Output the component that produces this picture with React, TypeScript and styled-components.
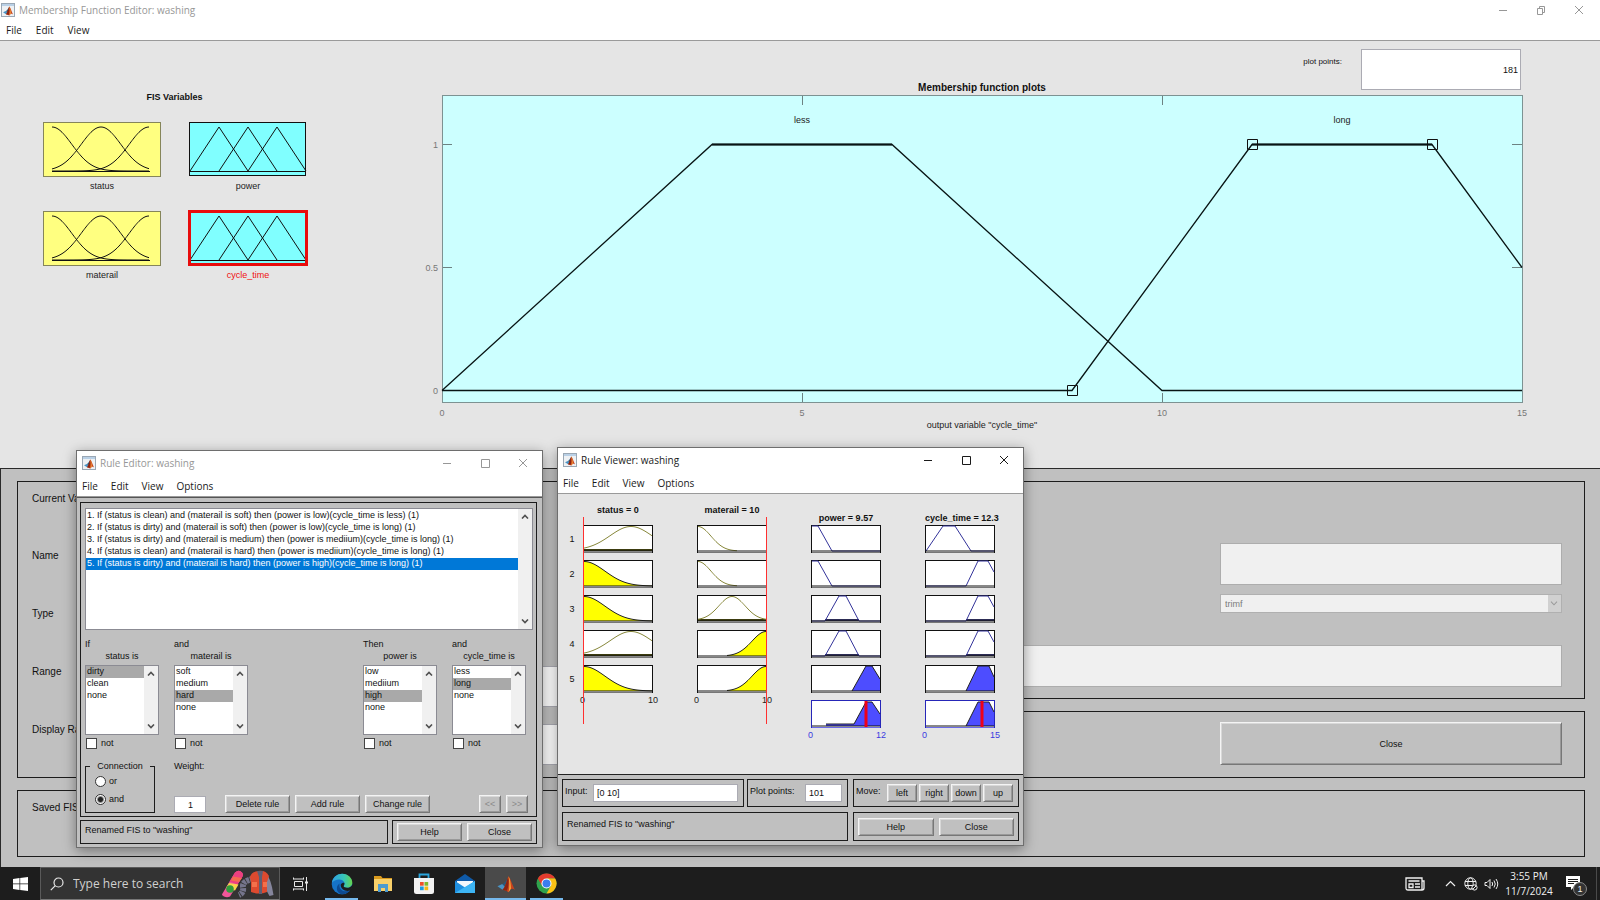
import React from "react";
import styled, { createGlobalStyle, css } from "styled-components";

const GlobalStyle = createGlobalStyle`
  *, *::before, *::after { box-sizing: border-box; }
  body { margin: 0; background: #1d1d1d; }
  body, button, input, select {
    font-family: "Liberation Sans", Arial, sans-serif;
    font-size: 9px;
    line-height: 12px;
    color: #111;
  }
`;

const chromeFont = css`
  font-family: "Open Sans", "Noto Sans", sans-serif;
  font-size: 10px;
  line-height: 14px;
`;

/* ---------- Desktop and window chrome ---------- */

const Desktop = styled.div`
  position: relative;
  min-height: 100vh;
  display: flex;
  flex-direction: column;
`;

const MainWindow = styled.main`
  flex: 1;
  display: flex;
  flex-direction: column;
  background: #e5e5e5;
`;

const FloatingWindow = styled.section<{ $left: number; $top: number }>`
  position: absolute;
  left: ${(p) => p.$left}px;
  top: ${(p) => p.$top}px;
  width: 467px;
  display: flex;
  flex-direction: column;
  background: #c0c0c0;
  border: 1px solid #6e6e6e;
  box-shadow: 0 3px 12px rgba(0, 0, 0, 0.4);
`;

const TitleBar = styled.header<{ $main?: boolean; $active?: boolean }>`
  ${chromeFont}
  display: flex;
  align-items: center;
  gap: 4px;
  height: ${(p) => (p.$main ? 19 : 24)}px;
  padding: ${(p) => (p.$main ? "0 16px 0 1px" : "0 14px 0 5px")};
  background: #fff;
  color: ${(p) => (p.$active ? "#1a1a1a" : "#979797")};
`;

const WindowTitle = styled.h1`
  flex: 1;
  margin: 0;
  font: inherit;
`;

const WindowControls = styled.div`
  display: flex;
  gap: 28px;
`;

const ControlButton = styled.button`
  display: flex;
  padding: 0;
  border: 0;
  background: none;
  color: inherit;
`;

const MenuBar = styled.nav<{ $main?: boolean }>`
  ${chromeFont}
  display: flex;
  align-items: center;
  gap: ${(p) => (p.$main ? 14 : 13)}px;
  height: 22px;
  padding: 0 ${(p) => (p.$main ? 6 : 5)}px;
  background: #fff;
  border-bottom: 1px solid #9a9a9a;
`;

const MenuItem = styled.button`
  padding: 0;
  border: 0;
  background: none;
  font: inherit;
  color: #1a1a1a;
`;

function MatlabMembrane() {
  return (
    <>
      <path d="M1 8.6 4.4 7l2 1.9L4.6 11z" fill="#4a93c4" />
      <path d="M4.4 7C6 6.600 7 4.600 8.300 2.200L8 8.500 6.400 8.900z" fill="#27597c" />
      <path d="M8.700 1.600C10 2.600 11.300 7.500 13.300 11.200 11.600 9.800 10.200 10 8.800 12.700 7.900 12.500 7.200 11.200 4.600 11 6.600 9.500 7.400 4.600 8.700 1.600z" fill="#c8431d" />
      <path d="M8.700 1.600C8.900 5 9 8.500 7.700 11.800L4.600 11C6.600 9.500 7.400 4.600 8.700 1.600z" fill="#8a2412" />
      <path d="M8.700 1.600C9.900 3.400 10.300 6.500 10.500 10.200L8.800 12.700C9.600 9 9.400 5 8.700 1.600z" fill="#f4a13c" />
    </>
  );
}

function AppIcon() {
  return (
    <svg width="14" height="14" viewBox="0 0 14 14" aria-hidden="true">
      <rect x="0.500" y="0.500" width="13" height="13" fill="#eef1f4" stroke="#9aa7b4" />
      <rect x="1" y="1" width="12" height="2" fill="#b9d0e6" />
      <g transform="translate(1.200 2.200) scale(0.820)">
        <MatlabMembrane />
      </g>
    </svg>
  );
}

function Controls({ restore }: { restore?: boolean }) {
  return (
    <WindowControls>
      <ControlButton aria-label="Minimize">
        <svg width="10" height="10" fill="none" stroke="currentColor">
          <path d="M1 5.500h8" />
        </svg>
      </ControlButton>
      <ControlButton aria-label={restore ? "Restore" : "Maximize"}>
        <svg width="10" height="10" fill="none" stroke="currentColor">
          {restore ? <path d="M1.500 3.500h5v6h-5zM3.500 3.500v-2h5v6h-2" /> : <path d="M1.500 1.500h8v8h-8z" />}
        </svg>
      </ControlButton>
      <ControlButton aria-label="Close">
        <svg width="10" height="10" fill="none" stroke="currentColor">
          <path d="M1 1l8 8M9 1l-8 8" />
        </svg>
      </ControlButton>
    </WindowControls>
  );
}

function Menu({ items, main }: { items: string[]; main?: boolean }) {
  return (
    <MenuBar $main={main}>
      {items.map((item) => (
        <MenuItem key={item}>{item}</MenuItem>
      ))}
    </MenuBar>
  );
}

/* ---------- Shared controls ---------- */

const Panel = styled.div`
  border: 1px solid #1c1c1c;
  background: #c0c0c0;
`;

const BevelButton = styled.button<{ $width?: number; $height?: number }>`
  width: ${(p) => (p.$width ? `${p.$width}px` : "100%")};
  height: ${(p) => p.$height ?? 18}px;
  padding: 0;
  background: #c0c0c0;
  border: 1px solid;
  border-color: #f4f4f4 #777 #777 #f4f4f4;
  box-shadow: inset 1px 1px #d8d8d8, inset -1px -1px #999;
  text-align: center;

  &:disabled {
    color: #8a8a8a;
  }
`;

const TextField = styled.input<{ $height: number; $align?: string; $width?: number }>`
  width: ${(p) => (p.$width ? `${p.$width}px` : "100%")};
  height: ${(p) => p.$height}px;
  padding: 0 2px 0 3px;
  border: 1px solid #ababb3;
  background: #fff;
  text-align: ${(p) => p.$align ?? "left"};

  &:disabled {
    background: #f0f0f0;
    border-color: #adadad;
  }
`;

/* ---------- Upper figure area ---------- */

const FigureArea = styled.div`
  display: grid;
  grid-template-columns: 442px minmax(0, 1fr);
  min-height: 427px;
  padding: 8px 78px 0 0;
`;

const Variables = styled.section`
  padding: 42px 0 0 43px;
`;

const VariablesTitle = styled.h2`
  width: 263px;
  margin: 0 0 19px;
  font-size: 9px;
  line-height: 12px;
  text-align: center;
`;

const VariableGrid = styled.div`
  display: grid;
  grid-template-columns: 118px 118px;
  gap: 19px 28px;
`;

const Variable = styled.figure<{ $selected?: boolean }>`
  display: flex;
  flex-direction: column;
  gap: 3px;
  margin: 0;
  text-align: center;
  color: ${(p) => (p.$selected ? "#f01010" : "#222")};
`;

const bell = (centre: number, sigma: number, from: number, to: number, base: number, height: number) => {
  const points: string[] = [];
  for (let x = from; x <= to; x += 1) {
    const y = base - height * Math.exp(-((x - centre) ** 2) / (2 * sigma ** 2));
    points.push(`${x},${y.toFixed(2)}`);
  }
  return points.join(" ");
};

function InputThumb() {
  return (
    <svg width="118" height="55" fill="none" stroke="#111">
      <rect x="0.500" y="0.500" width="117" height="54" fill="#ffff80" stroke="#85855a" />
      <polyline points={bell(9, 19.8, 9, 106, 49, 44)} />
      <polyline points={bell(58, 19.8, 9, 106, 49, 44)} />
      <polyline points={bell(106, 19.8, 9, 106, 49, 44)} />
      <path d="M9 49.500h98" />
    </svg>
  );
}

function OutputThumb({ selected }: { selected?: boolean }) {
  return (
    <svg width="118" height="55" fill="none" stroke="#111" overflow="visible">
      <rect x="0.500" y="0.500" width="116" height="53" fill="#80ffff" />
      <path d="M1 49 30 5l29 44M30 49 59 5l29 44M59 49 88 5l29 44" />
      <path d="M1 49.500h116" />
      {selected && <rect x="0.500" y="0.500" width="117" height="53" stroke="#e80c0c" strokeWidth="3" />}
    </svg>
  );
}

const PlotColumn = styled.section`
  display: flex;
  flex-direction: column;
`;

const PlotHeader = styled.div`
  display: grid;
  grid-template-columns: 1fr auto 1fr;
  height: 46px;
`;

const PlotTitle = styled.h2`
  grid-column: 2;
  align-self: end;
  margin: 0;
  font-size: 10px;
  line-height: 14px;
`;

const PlotPoints = styled.div`
  display: flex;
  justify-content: flex-end;
  gap: 19px;
  padding-right: 1px;
  font-size: 8px;

  label {
    padding-top: 7px;
  }
`;

const PlotSvg = styled.svg`
  display: block;
  width: 100%;
  overflow: visible;
  font-size: 9px;
`;

function MembershipPlot() {
  return (
    <PlotSvg viewBox="0 0 1080 340" fill="none" role="img" aria-label="Membership function plots">
      <rect x="0.500" y="0.500" width="1080" height="307" fill="#ccffff" stroke="#7d9292" />
      <path
        d="M360.500 1v9M720.500 1v9M360.500 298v9M720.500 298v9M1 49.500h9M1 172.500h9M1070 49.500h10M1070 172.500h10"
        stroke="#6d8282"
      />
      <g stroke="#081414" strokeWidth="1.300">
        <path d="M0 295.500 270 49.500H450L720 295.500H1080" />
        <path d="M0 295.500H630L810 49.500H990L1080 172.500" />
        <path d="M270 49.500H450M810 49.500H990" strokeWidth="2" />
      </g>
      <path d="M625.500 290.500h10v10h-10zM805.500 44.500h10v10h-10zM985.500 44.500h10v10h-10z" stroke="#111" />
      <g fill="#222" textAnchor="middle">
        <text x="360" y="28">less</text>
        <text x="900" y="28">long</text>
        <text x="540" y="333">output variable "cycle_time"</text>
      </g>
      <g fill="#777" textAnchor="middle">
        <text x="0" y="321">0</text>
        <text x="360" y="321">5</text>
        <text x="720" y="321">10</text>
        <text x="1080" y="321">15</text>
      </g>
      <g fill="#777" textAnchor="end">
        <text x="-4" y="53">1</text>
        <text x="-4" y="176">0.5</text>
        <text x="-4" y="299">0</text>
      </g>
    </PlotSvg>
  );
}

/* ---------- Lower control area ---------- */

const ControlArea = styled.div`
  flex: 1;
  display: grid;
  grid-template-columns: minmax(0, 1fr) minmax(0, 1fr);
  grid-template-rows: 218px 67px 67px;
  gap: 12px 13px;
  padding: 12px 15px 10px 16px;
  background: #c0c0c0;
  border: solid #2a2a2a;
  border-width: 1px 0 0 1px;
`;

const VariablePanel = styled(Panel)`
  grid-row: 1 / 3;
  display: grid;
  grid-template-columns: 280px 1fr;
  grid-template-rows: 57px repeat(3, 58px) 42px;
  padding: 11px 60px 0 14px;
`;

const FieldLabel = styled.label`
  font-size: 10px;
`;

const FunctionPanel = styled(Panel)`
  display: flex;
  flex-direction: column;
  align-items: flex-end;
  padding: 61px 22px 0 100px;
`;

const FunctionSelect = styled.select`
  appearance: none;
  width: 342px;
  height: 19px;
  margin: 9px 0 32px;
  padding: 0 4px;
  border: 1px solid #b0b0b0;
  border-radius: 0;
  opacity: 1;
  color: #7b7b7b;
  background: #f0f0f0
    url("data:image/svg+xml,%3Csvg xmlns='http://www.w3.org/2000/svg' width='13' height='18' fill='none' stroke='%23999'%3E%3Cpath fill='%23d0d0d0' stroke='none' d='M0 0h13v18H0z'/%3E%3Cpath d='M3 7l3 3 3-3'/%3E%3C/svg%3E")
    right center no-repeat;
`;

const ClosePanel = styled(Panel)`
  display: flex;
  justify-content: flex-end;
  align-items: flex-start;
  padding: 10px 22px;
`;

const SavedPanel = styled(Panel)`
  grid-column: 1 / 3;
  padding: 11px 14px;
  font-size: 10px;
`;

/* ---------- Rule editor ---------- */

const EditorBody = styled.div`
  display: flex;
  flex-direction: column;
  gap: 3px;
  padding: 4px 5px 3px 3px;
  border-top: 1px solid #555;
`;

const EditorPanel = styled(Panel)`
  display: flex;
  flex-direction: column;
  padding: 5px 3px 3px 4px;
`;

const ListFrame = styled.div<{ $height: number }>`
  display: flex;
  height: ${(p) => p.$height}px;
  border: 1px solid #8b8b93;
  background: #fff;
`;

const ListSelect = styled.select<{ $blue?: boolean }>`
  flex: 1;
  min-width: 0;
  height: 100%;
  padding: ${(p) => (p.$blue ? 1 : 0)}px 0 0;
  border: 0;
  border-radius: 0;
  outline: 0;
  overflow: hidden;
  background: #fff;

  option {
    height: 12px;
    min-height: 12px;
    padding: 0 1px;
    line-height: 12px;
    font-size: 9px;
  }

  option:checked {
    background-image: ${(p) =>
      p.$blue ? "linear-gradient(#0078d7, #0078d7)" : "linear-gradient(#a9a9a9, #a9a9a9)"};
    -webkit-text-fill-color: ${(p) => (p.$blue ? "#fff" : "#111")};
  }
`;

const ScrollTrack = styled.div`
  display: flex;
  flex-direction: column;
  justify-content: space-between;
  align-items: center;
  width: 14px;
  padding: 5px 0;
  background: #f0f0f0;
`;

function Scroller() {
  return (
    <ScrollTrack aria-hidden="true">
      <svg width="8" height="5" fill="none" stroke="#505050" strokeWidth="1.600">
        <path d="M1 4.500l3-3 3 3" />
      </svg>
      <svg width="8" height="5" fill="none" stroke="#505050" strokeWidth="1.600">
        <path d="M1 0.500l3 3 3-3" />
      </svg>
    </ScrollTrack>
  );
}

const TermGrid = styled.div`
  display: grid;
  grid-template-columns: 74px 74px 1fr 74px 74px;
  column-gap: 15px;
  margin: 8px 7px 11px 0;
`;

const Term = styled.div<{ $column: number }>`
  grid-column: ${(p) => p.$column};
  display: flex;
  flex-direction: column;

  > label:first-of-type {
    text-align: center;
    margin-bottom: 3px;
  }
`;

const CheckLabel = styled.label`
  display: flex;
  align-items: center;
  gap: 4px;
  margin-top: 2px;
  padding-left: 1px;

  input {
    appearance: none;
    width: 11px;
    height: 11px;
    margin: 0;
    border: 1px solid #444;
    background: #fff;
  }
`;

const EditorActions = styled.div`
  display: flex;
  align-items: flex-end;
`;

const Connection = styled.fieldset`
  width: 70px;
  height: 53px;
  margin: 0 19px 0 0;
  padding: 0;
  border: 1px solid #1c1c1c;

  legend {
    margin: 0 auto;
    padding: 0 7px;
    text-align: center;
  }
`;

const RadioLabel = styled.label`
  display: flex;
  align-items: center;
  gap: 3px;
  height: 18px;
  padding-left: 9px;

  input {
    appearance: none;
    width: 11px;
    height: 11px;
    margin: 0;
    border: 1px solid #333;
    border-radius: 50%;
    background: #fff;
  }

  input:checked {
    background: radial-gradient(#222 0 2px, #fff 4px);
  }
`;

const Weight = styled.div`
  display: flex;
  flex-direction: column;
  justify-content: space-between;
  align-self: stretch;
  width: 32px;
  margin-right: 19px;
`;

const RuleButtons = styled.div`
  display: flex;
  gap: 5px;
`;

const StepButtons = styled(RuleButtons)`
  margin: 0 5px 0 auto;
`;

const FooterRow = styled.div<{ $gap: number }>`
  display: flex;
  gap: ${(p) => p.$gap}px;
`;

const StatusPanel = styled(Panel)<{ $tall?: boolean }>`
  flex: 1;
  padding: ${(p) => (p.$tall ? 5 : 3)}px 4px;
`;

const ButtonPanel = styled(Panel)<{ $width: number; $tall?: boolean }>`
  display: flex;
  align-items: center;
  gap: 5px;
  width: ${(p) => p.$width}px;
  height: ${(p) => (p.$tall ? 29 : 24)}px;
  padding: 2px 4px;
`;

const rules = [
  "1. If (status is clean) and (materail is soft) then (power is low)(cycle_time is less) (1)",
  "2. If (status is dirty) and (materail is soft) then (power is low)(cycle_time is long) (1)",
  "3. If (status is dirty) and (materail is medium) then (power is mediium)(cycle_time is long) (1)",
  "4. If (status is clean) and (materail is hard) then (power is mediium)(cycle_time is long) (1)",
  "5. If (status is dirty) and (materail is hard) then (power is high)(cycle_time is long) (1)",
];

const terms = [
  { column: 1, lead: "If", name: "status", options: ["dirty", "clean", "none"], value: "dirty" },
  { column: 2, lead: "and", name: "materail", options: ["soft", "medium", "hard", "none"], value: "hard" },
  { column: 4, lead: "Then", name: "power", options: ["low", "mediium", "high", "none"], value: "high" },
  { column: 5, lead: "and", name: "cycle_time", options: ["less", "long", "none"], value: "long" },
];

function RuleEditor() {
  return (
    <FloatingWindow $left={76} $top={450}>
      <TitleBar>
        <AppIcon />
        <WindowTitle>Rule Editor: washing</WindowTitle>
        <Controls />
      </TitleBar>
      <Menu items={["File", "Edit", "View", "Options"]} />
      <EditorBody>
        <EditorPanel>
          <ListFrame $height={122}>
            <ListSelect $blue size={10} defaultValue={rules[4]} aria-label="Rules">
              {rules.map((rule) => (
                <option key={rule}>{rule}</option>
              ))}
            </ListSelect>
            <Scroller />
          </ListFrame>
          <TermGrid>
            {terms.map((term) => (
              <Term key={term.name} $column={term.column}>
                <span>{term.lead}</span>
                <label htmlFor={`term-${term.name}`}>{term.name} is</label>
                <ListFrame $height={70}>
                  <ListSelect id={`term-${term.name}`} size={5} defaultValue={term.value}>
                    {term.options.map((option) => (
                      <option key={option}>{option}</option>
                    ))}
                  </ListSelect>
                  <Scroller />
                </ListFrame>
                <CheckLabel>
                  <input type="checkbox" />
                  not
                </CheckLabel>
              </Term>
            ))}
          </TermGrid>
          <EditorActions>
            <Connection>
              <legend>Connection</legend>
              <RadioLabel>
                <input type="radio" name="connection" />
                or
              </RadioLabel>
              <RadioLabel>
                <input type="radio" name="connection" defaultChecked />
                and
              </RadioLabel>
            </Connection>
            <Weight>
              <label htmlFor="weight">Weight:</label>
              <TextField id="weight" $height={17} $align="center" defaultValue="1" />
            </Weight>
            <RuleButtons>
              <BevelButton $width={65}>Delete rule</BevelButton>
              <BevelButton $width={65}>Add rule</BevelButton>
              <BevelButton $width={65}>Change rule</BevelButton>
            </RuleButtons>
            <StepButtons>
              <BevelButton $width={22} disabled>{"<<"}</BevelButton>
              <BevelButton $width={22} disabled>{">>"}</BevelButton>
            </StepButtons>
          </EditorActions>
        </EditorPanel>
        <FooterRow $gap={4}>
          <StatusPanel>Renamed FIS to "washing"</StatusPanel>
          <ButtonPanel $width={145}>
            <BevelButton>Help</BevelButton>
            <BevelButton>Close</BevelButton>
          </ButtonPanel>
        </FooterRow>
      </EditorBody>
    </FloatingWindow>
  );
}

/* ---------- Rule viewer ---------- */

const ViewerFigure = styled.div`
  display: flex;
  gap: 6px;
  height: 280px;
  padding: 10px 0 0 9px;
  background: #e5e5e5;
`;

const RuleNumbers = styled.ol`
  display: flex;
  flex-direction: column;
  gap: 23px;
  width: 10px;
  margin: 0;
  padding: 29px 0 0;
  list-style: none;
  text-align: center;
`;

const ViewerColumns = styled.div`
  display: grid;
  grid-template-columns: repeat(4, 70px);
  align-items: start;
  gap: 44px;
`;

const ViewerColumn = styled.div<{ $line?: "left" | "right" }>`
  position: relative;
  display: flex;
  flex-direction: column;
  gap: 7px;

  ${(p) =>
    p.$line &&
    css`
      &::after {
        content: "";
        position: absolute;
        top: 13px;
        ${p.$line}: 0;
        width: 1px;
        height: 207px;
        background: #ff3030;
      }
    `}
`;

const ColumnTitle = styled.h2<{ $output?: boolean }>`
  height: 14px;
  margin: 0;
  padding-top: ${(p) => (p.$output ? 8 : 0)}px;
  font-size: 9px;
  line-height: 12px;
  text-align: center;
  white-space: nowrap;
`;

const Ticks = styled.div<{ $output?: boolean }>`
  display: flex;
  justify-content: space-between;
  margin: -6px -5px 0 -3px;
  color: ${(p) => (p.$output ? "#3a3ae0" : "#222")};
`;

type Shape = { line: string; fill?: boolean; strip?: [number, number]; centroid?: number };

const clean: Shape = { line: bell(48, 21, 1, 69, 25, 23.5), strip: [1, 69] };
const dirty: Shape = { line: bell(1, 21, 1, 69, 26, 24.5), fill: true };
const soft: Shape = { line: bell(1, 13, 1, 40, 26, 24.5) };
const medium: Shape = { line: bell(35, 13, 1, 69, 25, 23.5), strip: [1, 69] };
const hard: Shape = { line: bell(69, 14, 30, 69, 26, 24.5), fill: true };

const low: Shape = { line: "1,1 7,1 21,26 69,26" };
const mediium: Shape = { line: "1,26 14,26 28,1 35,1 48,26 69,26", strip: [14, 48] };
const high: Shape = { line: "41,26 55,1 61,1 69,14", fill: true };
const less: Shape = { line: "1,26 18,1 30,1 46,26 69,26" };
const long: Shape = { line: "1,26 41,26 53,1 63,1 69,12" };
const longStrip: Shape = { ...long, strip: [41, 69] };
const longFill: Shape = { line: "41,26 53,1 64,1 69,12", fill: true };

function MiniPlot({ shape, output, total }: { shape: Shape; output?: boolean; total?: boolean }) {
  const lineColour = shape.fill ? "#222" : output ? "#33339a" : "#87873a";
  const frame = total ? "#2626b8" : "#111";
  const start = shape.line.split(",")[0];
  return (
    <svg width="70" height="28" fill="none">
      <rect x="0.500" y="0.500" width="69" height="27" fill="#fff" stroke={frame} />
      <path d="M1 27.500h68" stroke={total ? "#6b6be8" : "#777"} />
      {shape.fill && (
        <polygon points={`${start},26 ${shape.line} 69,26`} fill={output ? "#4d4dff" : "#ffff00"} />
      )}
      {shape.strip && (
        <rect
          x={shape.strip[0]}
          y="24"
          width={shape.strip[1] - shape.strip[0]}
          height="2"
          fill={output ? "#2c2c55" : "#3c3c10"}
        />
      )}
      <polyline points={shape.line} stroke={lineColour} />
      <path d="M1 26h68" stroke="#111" />
      {shape.centroid && <path d={`M${shape.centroid} 1v26`} stroke="#f00018" strokeWidth="3" />}
    </svg>
  );
}

const columns: {
  title: string;
  output?: boolean;
  line?: "left" | "right";
  range: [string, string];
  shapes: Shape[];
  total?: Shape;
}[] = [
  { title: "status = 0", line: "left", range: ["0", "10"], shapes: [clean, dirty, dirty, clean, dirty] },
  { title: "materail = 10", line: "right", range: ["0", "10"], shapes: [soft, soft, medium, hard, hard] },
  {
    title: "power = 9.57",
    output: true,
    range: ["0", "12"],
    shapes: [low, low, mediium, mediium, high],
    total: { line: "15,24 43,24 55,2 61,2 69,14", fill: true, centroid: 55 },
  },
  {
    title: "cycle_time = 12.3",
    output: true,
    range: ["0", "15"],
    shapes: [less, long, longStrip, longStrip, longFill],
    total: { line: "41,26 53,2 64,2 69,12", fill: true, centroid: 57 },
  },
];

const ViewerControls = styled.div`
  display: flex;
  flex-direction: column;
  gap: 5px;
  padding: 4px 4px 4px 4px;
  border-top: 1px solid #222;
`;

const FieldPanel = styled(Panel)<{ $width?: number }>`
  ${(p) => (p.$width ? `width: ${p.$width}px;` : "flex: 1;")}
  display: flex;
  align-items: flex-start;
  justify-content: space-between;
  padding: 4px 5px 4px 2px;

  label, span {
    line-height: 14px;
  }
`;

const FieldGroup = styled.div`
  flex: 1;
  display: flex;
  gap: 3px;
`;

const MoveButtons = styled.div`
  display: flex;
  gap: 2px;
`;

function RuleViewer() {
  return (
    <FloatingWindow $left={557} $top={447}>
      <TitleBar $active>
        <AppIcon />
        <WindowTitle>Rule Viewer: washing</WindowTitle>
        <Controls />
      </TitleBar>
      <Menu items={["File", "Edit", "View", "Options"]} />
      <ViewerFigure>
        <RuleNumbers>
          {[1, 2, 3, 4, 5].map((n) => (
            <li key={n}>{n}</li>
          ))}
        </RuleNumbers>
        <ViewerColumns>
          {columns.map((column) => (
            <ViewerColumn key={column.title} $line={column.line}>
              <ColumnTitle $output={column.output}>{column.title}</ColumnTitle>
              {column.shapes.map((shape, i) => (
                <MiniPlot key={i} shape={shape} output={column.output} />
              ))}
              {column.total && <MiniPlot shape={column.total} output total />}
              <Ticks $output={column.output}>
                <span>{column.range[0]}</span>
                <span>{column.range[1]}</span>
              </Ticks>
            </ViewerColumn>
          ))}
        </ViewerColumns>
      </ViewerFigure>
      <ViewerControls>
        <FooterRow $gap={5}>
          <FieldGroup>
            <FieldPanel>
              <label htmlFor="rule-input">Input:</label>
              <TextField id="rule-input" $height={18} $width={145} defaultValue="[0 10]" />
            </FieldPanel>
            <FieldPanel $width={101}>
              <label htmlFor="viewer-points">Plot points:</label>
              <TextField id="viewer-points" $height={18} $width={37} defaultValue="101" />
            </FieldPanel>
          </FieldGroup>
          <FieldPanel $width={166}>
            <span>Move:</span>
            <MoveButtons>
              <BevelButton $width={30}>left</BevelButton>
              <BevelButton $width={30}>right</BevelButton>
              <BevelButton $width={30}>down</BevelButton>
              <BevelButton $width={30}>up</BevelButton>
            </MoveButtons>
          </FieldPanel>
        </FooterRow>
        <FooterRow $gap={5}>
          <StatusPanel $tall>Renamed FIS to "washing"</StatusPanel>
          <ButtonPanel $width={166} $tall>
            <BevelButton>Help</BevelButton>
            <BevelButton>Close</BevelButton>
          </ButtonPanel>
        </FooterRow>
      </ViewerControls>
    </FloatingWindow>
  );
}

/* ---------- Taskbar ---------- */

const Taskbar = styled.footer`
  ${chromeFont}
  display: flex;
  align-items: stretch;
  height: 33px;
  background: #1d1d1d;
  color: #f0f0f0;
`;

const TaskButton = styled.button<{ $open?: boolean; $active?: boolean }>`
  display: flex;
  align-items: center;
  justify-content: center;
  width: 41px;
  padding: 0;
  border: 0;
  background: ${(p) => (p.$active ? "#4a4a4a" : "none")};
  ${(p) =>
    p.$open &&
    css`
      box-shadow: inset 0 -2px #76b9ed;
    `}
`;

const StartButton = styled(TaskButton)`
  width: 40px;
`;

/* Open but unfocused windows get an underline narrower than the button. */
const OpenTaskButton = styled(TaskButton)`
  background: linear-gradient(#76b9ed, #76b9ed) center bottom / 33px 2px no-repeat;
`;

const SearchBox = styled.label`
  display: flex;
  align-items: center;
  gap: 9px;
  width: 240px;
  padding: 0 4px 0 9px;
  background: #333;
  border: 1px solid #5a5a5a;
  border-bottom-color: #777;

  input {
    flex: 1;
    min-width: 0;
    padding: 0;
    border: 0;
    background: none;
    font-family: "Open Sans", "Noto Sans", sans-serif;
    font-size: 12px;
    line-height: 16px;
  }

  input::placeholder {
    color: #d0d0d0;
    opacity: 1;
  }
`;

const Tray = styled.div`
  display: flex;
  align-items: center;
  margin-left: auto;
  padding-right: 3px;
  border-right: 1px solid #4a4a4a;
  margin-right: 3px;
`;

const TrayButton = styled.button<{ $gap: number }>`
  display: flex;
  margin: 0 ${(p) => p.$gap}px 0 0;
  padding: 0;
  border: 0;
  background: none;
  color: #f0f0f0;
`;

const Clock = styled.time`
  width: 52px;
  margin-right: 11px;
  font-size: 10px;
  line-height: 15px;
  text-align: center;
`;

const Notice = styled(TrayButton)`
  position: relative;

  span {
    position: absolute;
    left: 7px;
    top: 6px;
    width: 14px;
    height: 14px;
    border: 1px solid #8a8a8a;
    border-radius: 50%;
    background: #333;
    font-size: 9px;
    line-height: 12px;
    text-align: center;
  }
`;

function SearchArt() {
  return (
    <svg width="54" height="28" viewBox="0 0 54 28" aria-hidden="true">
      <path d="M1.500 23.500 14 2.500Q18-1 21 2.500q1.500 1.500.5 4L9 26.500q-3 1.500-6 0t-1.500-3z" fill="#f0569a" />
      <path d="M8.500 11.500 14 2.500Q18-1 21 2.500q1.500 1.500.5 4l-5 8z" fill="#ec3f7f" />
      <path d="M8 13l9.500 1.500-3.500 6L5 18z" fill="#f7d34c" />
      <path d="M12 6.500l9 1.500-3 4-8-1.500z" fill="#f36c4f" />
      <circle cx="9" cy="19" r="3.800" fill="#2f9c3c" />
      <path d="M32 9Q21 11 22 17q1 6-4 8" fill="none" stroke="#75758c" strokeWidth="6" strokeDasharray="3 .8" />
      <path d="M45 4q5 4 7.500 21l-4 1q-5-8-6-18z" fill="#85859c" />
      <path d="M29 7q1-5 8-6 8-1 11 5l-2 6v10q-8 3-16 0V12z" fill="#dd4a2f" />
      <path d="M36 1h6l-1 6v17h-3V7z" fill="#5f5f73" />
      <path d="M31 12h5v5h-5zM42 12h4v5h-4z" fill="#f3704b" />
    </svg>
  );
}

function TaskbarView() {
  return (
    <Taskbar>
      <StartButton aria-label="Start">
        <svg width="15" height="14" viewBox="0 0 15 14" fill="#fff">
          <path d="M0 2 6.500 1v5.500H0zM7.200.9 15 0v6.500H7.200zM0 7.300h6.500V13L0 12zM7.200 7.300H15V14l-7.800-1z" />
        </svg>
      </StartButton>
      <SearchBox>
        <svg width="14" height="14" viewBox="0 0 14 14" fill="none" stroke="#e8e8e8" strokeWidth="1.200">
          <circle cx="8.500" cy="5.500" r="4.500" />
          <path d="M5.300 8.700.8 13.200" />
        </svg>
        <input type="search" placeholder="Type here to search" aria-label="Search" />
        <SearchArt />
      </SearchBox>
      <TaskButton aria-label="Task view">
        <svg width="15" height="14" fill="none" stroke="#e8e8e8">
          <path d="M1.500 4.500h8v5h-8zM.5 2.500v-2M.5 2h10M10.500.5v2M.5 11.500v2M.5 12h10M10.500 11.500v2M13.500 0v14" />
          <path d="M12 5.500h3" strokeWidth="2" />
        </svg>
      </TaskButton>
      <OpenTaskButton aria-label="Edge">
        <svg width="22" height="22" viewBox="0 0 22 22">
          <defs>
            <linearGradient id="edge-top" x1="0" x2="1">
              <stop offset="0" stopColor="#2f9fe4" />
              <stop offset="0.600" stopColor="#37c6b6" />
              <stop offset="1" stopColor="#65d54f" />
            </linearGradient>
          </defs>
          <circle cx="11" cy="11" r="10.300" fill="#1673c7" />
          <path d="M.8 10C2 3.500 6.500.7 11.300.7c6 0 10 4.500 10 8.800 0 3.500-2.600 5.300-5.300 5.300-2 0-3.300-.6-3.300-1.300s1-1 .8-3C13.200 8 11 6.500 8 6.500 5 6.500 2.300 8 .8 10z" fill="url(#edge-top)" />
          <path d="M8.500 10.500c-1 6 3.500 9.500 10.500 7-2 2.500-5 4-8.500 3.700C5 20 4.500 13 8.500 10.500z" fill="#0c4a92" />
          <path d="M13.400 10c.3 2-1.200 2.800-.7 3.500.5.900 3.600 2 6.500.4 1-.6 1.800-1.400 2.100-2.500.3 3-.6 4.800-2.300 6.100-4 1.500-9.500-1-9.300-5.700.8-2 3.400-2.300 3.700-1.800z" fill="#1d1d1d" />
        </svg>
      </OpenTaskButton>
      <TaskButton aria-label="File Explorer">
        <svg width="20" height="18" viewBox="0 0 20 18">
          <path d="M1 1h7l1.500 2H19v3H1z" fill="#d99a1e" />
          <path d="M1 4h18v12H1z" fill="#f8d06a" />
          <path d="M5 9h10v8h-3v-4H8v4H5z" fill="#4d9bcf" />
        </svg>
      </TaskButton>
      <TaskButton aria-label="Store">
        <svg width="20" height="22" viewBox="0 0 20 22">
          <path d="M5.500 7V1.500h9V7" fill="none" stroke="#2aa5dd" strokeWidth="1.800" />
          <path d="M0 5h20v13.500q0 2.500-2.500 2.500h-15Q0 21 0 18.500z" fill="#f2f2f2" />
          <path d="M6 9h3.700v3.700H6z" fill="#f0502b" />
          <path d="M10.500 9h3.700v3.700h-3.700z" fill="#7fba2c" />
          <path d="M6 13.500h3.700v3.700H6z" fill="#1e9ae0" />
          <path d="M10.500 13.500h3.700v3.700h-3.700z" fill="#f7b916" />
        </svg>
      </TaskButton>
      <TaskButton aria-label="Mail">
        <svg width="22" height="20" viewBox="0 0 22 20">
          <path d="M1 7 11 0l10 7v3H1z" fill="#0f5aa8" />
          <path d="M3 7h16v8H3z" fill="#f4f8fc" />
          <path d="M1 7l10 6.500L21 7v12H1z" fill="#1f8fe0" />
          <path d="M1 19 21 7v12z" fill="#3db5f4" />
        </svg>
      </TaskButton>
      <TaskButton $open $active aria-label="MATLAB">
        <svg width="20" height="20" viewBox="0 0 14 14">
          <MatlabMembrane />
        </svg>
      </TaskButton>
      <OpenTaskButton aria-label="Chrome">
        <svg width="21" height="21" viewBox="0 0 21 21">
          <circle cx="10.500" cy="10.500" r="10" fill="#2fa24c" />
          <path d="M1.800 5.500A10 10 0 0 1 19.200 5.500H10.500L6.200 13z" fill="#e33b2e" />
          <path d="M19.200 5.500A10 10 0 0 1 10.500 20.500L14.800 13 10.500 5.500z" fill="#fbc116" />
          <circle cx="10.500" cy="10.500" r="5" fill="#fff" />
          <circle cx="10.500" cy="10.500" r="4" fill="#3b7ded" />
        </svg>
      </OpenTaskButton>
      <Tray>
        <TrayButton $gap={20} aria-label="News">
          <svg width="20" height="14" fill="none" stroke="currentColor" strokeWidth="1.300">
            <path d="M1 1h16v12H3q-2 0-2-2zM17 4h2v7q0 2-2 2M3.500 4h11M4 7h4v3.500H4zM10 7h5M10 10h5" />
          </svg>
        </TrayButton>
        <TrayButton $gap={8} aria-label="Hidden icons">
          <svg width="11" height="7" fill="none" stroke="currentColor" strokeWidth="1.200">
            <path d="M1 6l4.500-4.500L10 6" />
          </svg>
        </TrayButton>
        <TrayButton $gap={6} aria-label="Network">
          <svg width="14" height="14" fill="none" stroke="currentColor">
            <circle cx="6.500" cy="6.500" r="5.700" />
            <ellipse cx="6.500" cy="6.500" rx="2.700" ry="5.700" />
            <path d="M1 4.500h11M1 8.500h11" />
            <circle cx="10.500" cy="10.500" r="2.600" fill="#1d1d1d" />
            <path d="M8.800 12.200l3.400-3.400" />
          </svg>
        </TrayButton>
        <TrayButton $gap={4} aria-label="Volume">
          <svg width="15" height="12" fill="none" stroke="currentColor">
            <path d="M1 4.500h2l3-3v9l-3-3H1zM8 4q1.300 2 0 4M10 2.500q2.500 3.500 0 7M12 1q3.500 5 0 10" />
          </svg>
        </TrayButton>
        <Clock>
          3:55 PM
          <br />
          11/7/2024
        </Clock>
        <Notice $gap={13} aria-label="Notifications">
          <svg width="14" height="15">
            <path d="M0 0h14v11H8l-3 3v-3H0z" fill="#fff" />
            <path d="M2 3.500h10M2 5.500h10M2 7.500h6" stroke="#1d1d1d" />
          </svg>
          <span>1</span>
        </Notice>
      </Tray>
    </Taskbar>
  );
}

export default function App() {
  return (
    <Desktop>
      <GlobalStyle />
      <MainWindow>
        <TitleBar $main>
          <AppIcon />
          <WindowTitle>Membership Function Editor: washing</WindowTitle>
          <Controls restore />
        </TitleBar>
        <Menu main items={["File", "Edit", "View"]} />
        <FigureArea>
          <Variables>
            <VariablesTitle>FIS Variables</VariablesTitle>
            <VariableGrid>
              <Variable>
                <InputThumb />
                <figcaption>status</figcaption>
              </Variable>
              <Variable>
                <OutputThumb />
                <figcaption>power</figcaption>
              </Variable>
              <Variable>
                <InputThumb />
                <figcaption>materail</figcaption>
              </Variable>
              <Variable $selected>
                <OutputThumb selected />
                <figcaption>cycle_time</figcaption>
              </Variable>
            </VariableGrid>
          </Variables>
          <PlotColumn>
            <PlotHeader>
              <PlotTitle>Membership function plots</PlotTitle>
              <PlotPoints>
                <label htmlFor="plot-points">plot points:</label>
                <TextField id="plot-points" $height={41} $width={160} $align="right" defaultValue="181" />
              </PlotPoints>
            </PlotHeader>
            <MembershipPlot />
          </PlotColumn>
        </FigureArea>
        <ControlArea>
          <VariablePanel>
            <FieldLabel as="span">Current Variable</FieldLabel>
            <span />
            <FieldLabel as="span">Name</FieldLabel>
            <span />
            <FieldLabel as="span">Type</FieldLabel>
            <span />
            <FieldLabel htmlFor="range">Range</FieldLabel>
            <TextField id="range" $height={41} />
            <FieldLabel htmlFor="display-range">Display Range</FieldLabel>
            <TextField id="display-range" $height={41} />
          </VariablePanel>
          <FunctionPanel>
            <TextField $height={42} $width={342} disabled aria-label="Function name" />
            <FunctionSelect disabled aria-label="Function type">
              <option>trimf</option>
            </FunctionSelect>
            <TextField $height={42} disabled aria-label="Function parameters" />
          </FunctionPanel>
          <ClosePanel>
            <BevelButton $width={342} $height={43}>Close</BevelButton>
          </ClosePanel>
          <SavedPanel>Saved FIS "washing"</SavedPanel>
        </ControlArea>
      </MainWindow>
      <RuleEditor />
      <RuleViewer />
      <TaskbarView />
    </Desktop>
  );
}
